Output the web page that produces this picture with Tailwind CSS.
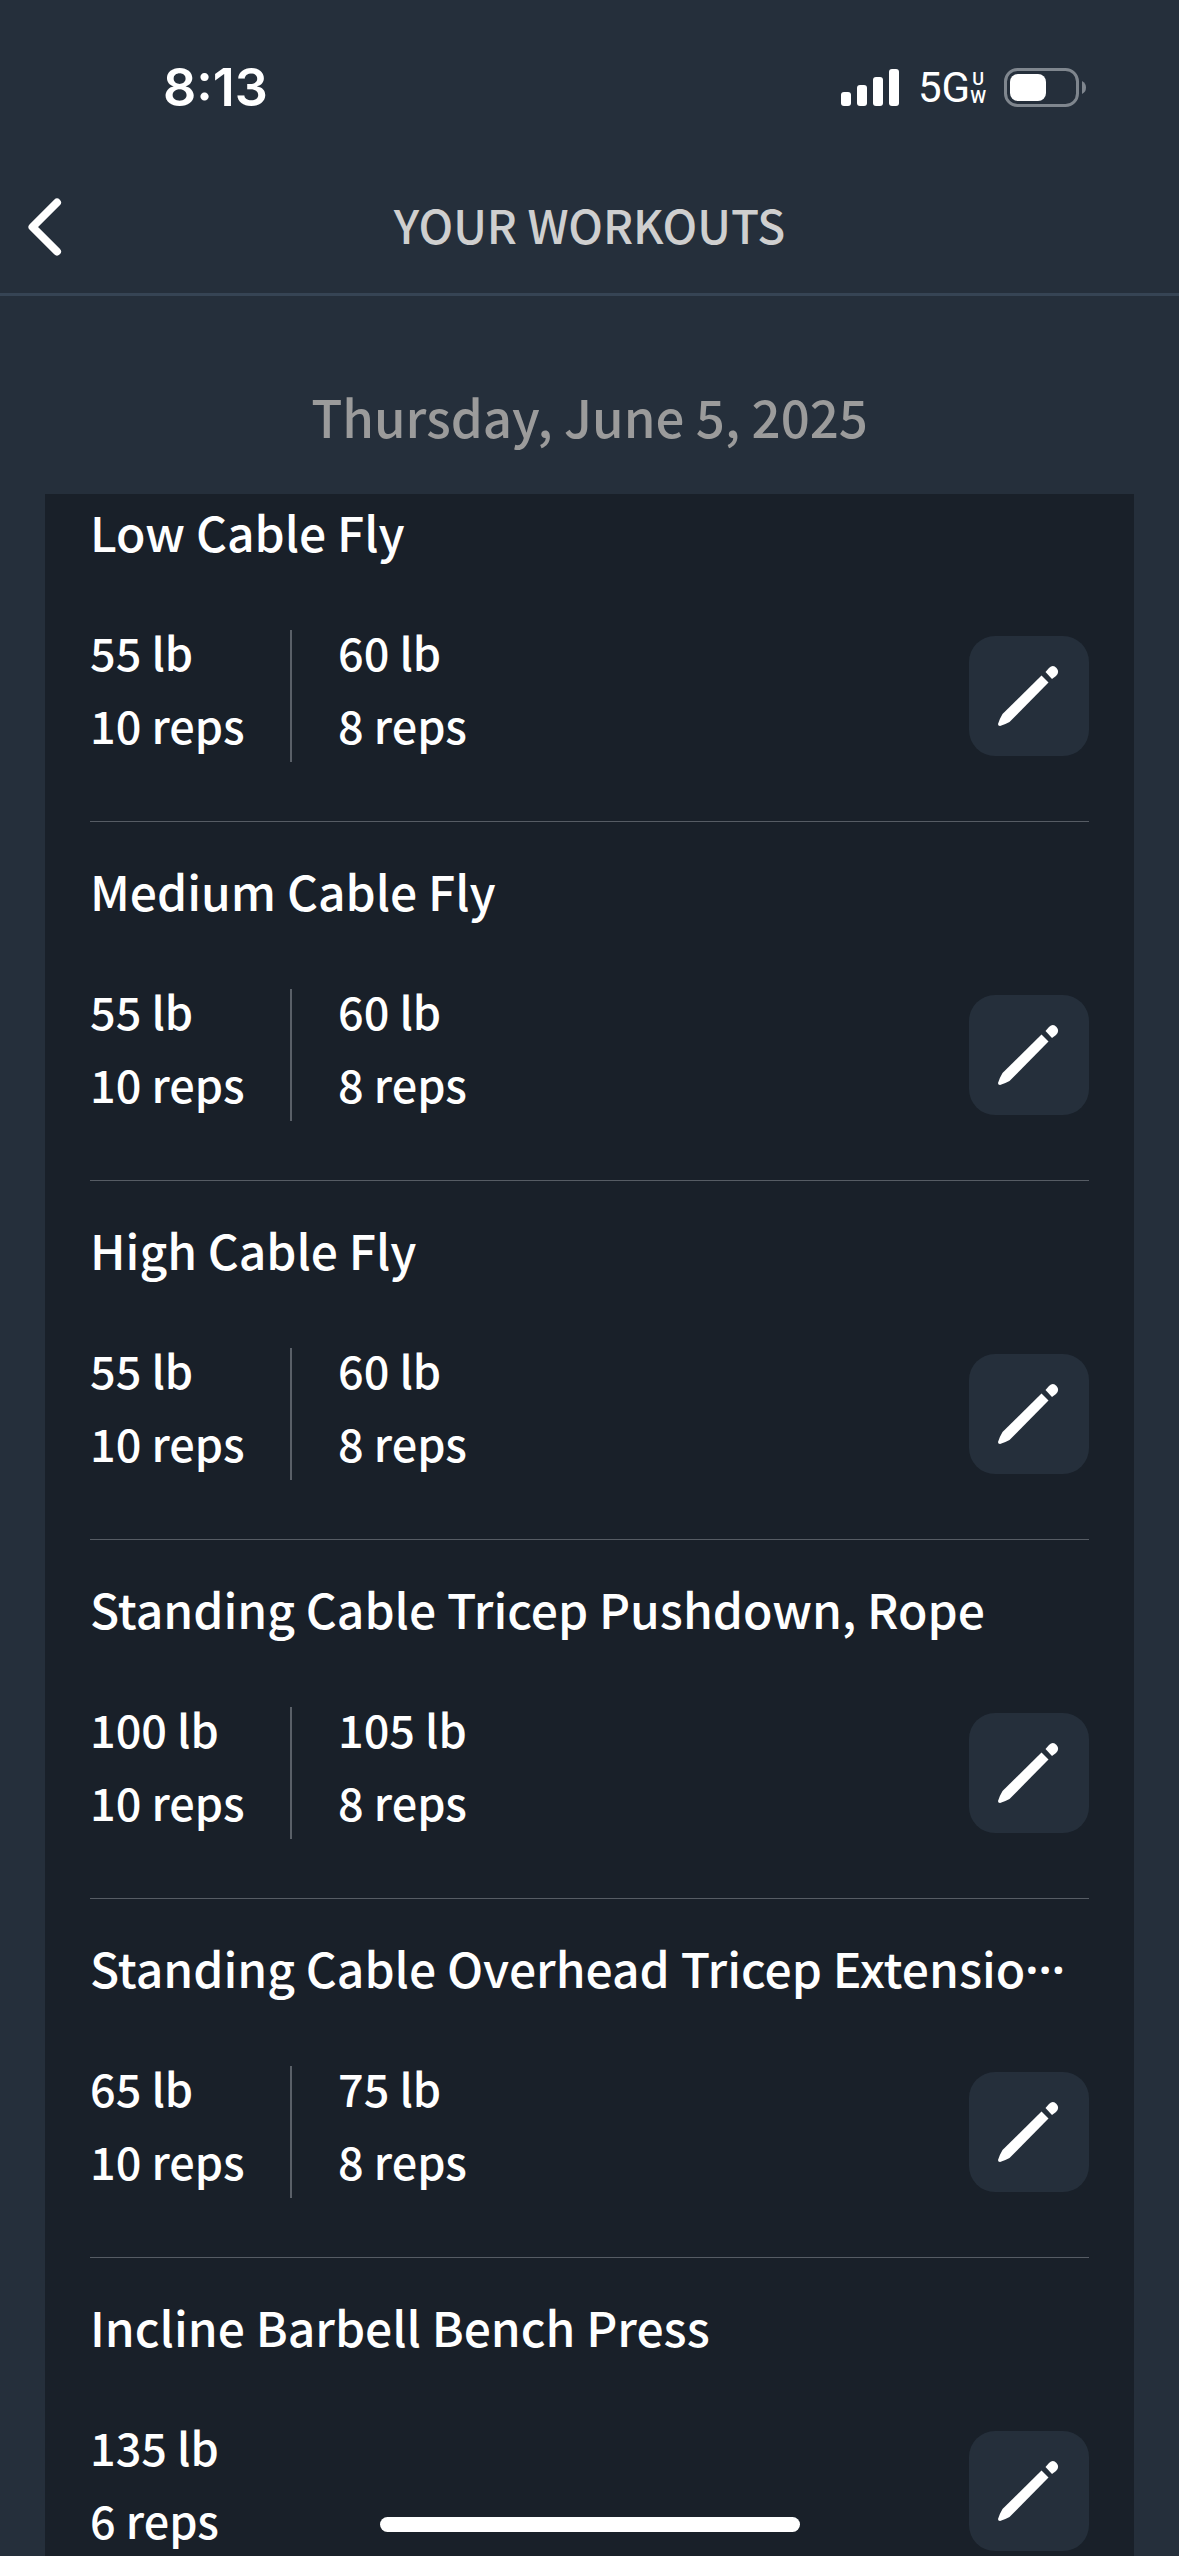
<!DOCTYPE html>
<html lang="en">
<head>
<meta charset="utf-8">
<meta name="viewport" content="width=device-width, initial-scale=1">
<title>Your Workouts</title>
<script src="https://cdn.jsdelivr.net/npm/@tailwindcss/browser@4"></script>
</head>
<body class="flex h-screen flex-col overflow-hidden bg-[#252f3b] font-['Noto_Sans_CJK_KR',sans-serif] font-medium text-white">
  <svg class="hidden" aria-hidden="true">
    <symbol id="pencil" viewBox="0 0 120 120">
      <path fill="#fff" d="M72.500 39.500 79.500 46.500 40.500 86Q36 88.500 31 90Q29 90 29 88Q31 82 33.500 78Z"/>
      <path fill="#fff" d="M76.500 36 80 32Q84 28 87.500 32Q91 36 87 40L83 43Z"/>
    </symbol>
  </svg>

  <div class="flex h-[172px] shrink-0 items-center justify-between pt-[4px] pr-[93px] pl-[163px]">
    <time class="font-['Inter',sans-serif] text-[52px] leading-[60px] font-semibold">8:13</time>
    <div class="flex items-center">
      <svg class="h-[40px] w-[58px]" viewBox="0 0 58 40" fill="#fff" role="img" aria-label="Signal">
        <rect x="0" y="24" width="10" height="14" rx="3"/>
        <rect x="16" y="17" width="10" height="21" rx="3"/>
        <rect x="32" y="9" width="10" height="29" rx="3"/>
        <rect x="48" y="1" width="10" height="37" rx="3"/>
      </svg>
      <div class="ml-[19px] flex items-center">
        <span class="font-['Roboto',sans-serif] text-[42px] leading-[44px] font-normal">5G</span>
        <span class="flex flex-col items-center font-['Roboto',sans-serif] text-[18px] leading-[18px]"><span>U</span><span>W</span></span>
      </div>
      <svg class="ml-[18px] h-[40px] w-[82px]" viewBox="0 0 82 40" role="img" aria-label="Battery">
        <rect x="1.500" y="1.500" width="72" height="36" rx="12" fill="none" stroke="#7f868e" stroke-width="3"/>
        <rect x="6" y="6" width="36" height="27" rx="8" fill="#fff"/>
        <path d="M78 13Q82 15 82 19.500Q82 24 78 26Z" fill="#7f868e"/>
      </svg>
    </div>
  </div>

  <header class="grid h-[124px] shrink-0 grid-cols-[100px_1fr_100px] border-b-3 border-[#364454] pb-[18px]">
    <button type="button" aria-label="Back" class="flex items-center pt-[7px] pl-[24px]">
      <svg class="h-[64px] w-[40px]" viewBox="0 0 40 64" fill="none" stroke="#fff" stroke-width="8" stroke-linecap="round" stroke-linejoin="round"><path d="M33 7.500 8.500 32 33 56.500"/></svg>
    </button>
    <h1 class="self-center text-center text-[46px] leading-[60px] text-[#cfcfcf]">YOUR WORKOUTS</h1>
  </header>

  <main class="min-h-0 flex-1 overflow-y-auto [scrollbar-width:none]">
    <h2 class="pt-[84px] pb-[42px] text-center text-[51px] leading-[72px] text-[#9b9b9b]">Thursday, June 5, 2025</h2>
    <div id="workouts" class="mx-[45px] bg-[#192029] px-[45px]"></div>
  </main>

  <div class="fixed bottom-[24px] left-1/2 h-[15px] w-[420px] -translate-x-1/2 rounded-full bg-white"></div>

  <script>
    const workouts = [
      ["Low Cable Fly", [[55, 10], [60, 8]]],
      ["Medium Cable Fly", [[55, 10], [60, 8]]],
      ["High Cable Fly", [[55, 10], [60, 8]]],
      ["Standing Cable Tricep Pushdown, Rope", [[100, 10], [105, 8]]],
      ["Standing Cable Overhead Tricep Extensio···", [[65, 10], [75, 8]]],
      ["Incline Barbell Bench Press", [[135, 6]]],
    ];
    const title = (name) => name.replace("···", `<span class="font-['Noto_Sans',sans-serif] font-semibold">···</span>`);
    document.getElementById("workouts").innerHTML = workouts.map(([name, sets]) => `
      <section class="border-b border-[#565c64] pt-[31px] pb-[59px] first:pt-0">
        <h3 class="h-[74px] text-[48px] leading-[74px] whitespace-nowrap">${title(name)}</h3>
        <div class="mt-[62px] flex items-center justify-between">
          <ul class="flex">
            ${sets.map(([lb, reps]) => `
            <li class="flex min-w-[200px] flex-col gap-[29px] pb-[15px] text-[45px] leading-[44px] not-first:border-l-2 not-first:border-[#5a6068] not-first:pl-[46px]">
              <span>${lb} lb</span><span>${reps} reps</span>
            </li>`).join("")}
          </ul>
          <button type="button" aria-label="Edit ${name}" class="size-[120px] rounded-[26px] bg-[#252f3b]">
            <svg class="size-full"><use href="#pencil"/></svg>
          </button>
        </div>
      </section>`).join("");
  </script>
</body>
</html>
